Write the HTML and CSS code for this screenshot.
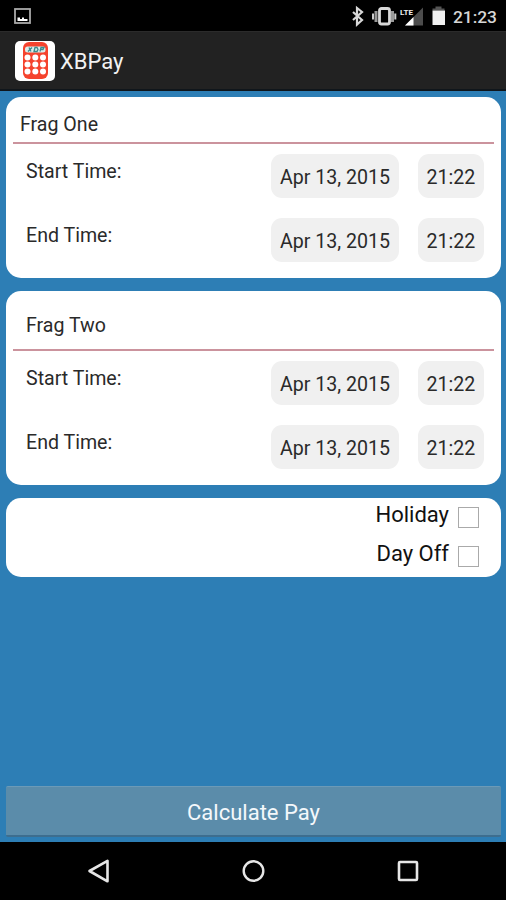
FILE: index.html
```html
<!DOCTYPE html>
<html lang="en">
<head>
<meta charset="utf-8">
<title>XBPay</title>
<link rel="stylesheet" href="styles.css">
</head>
<body>
<header class="status">
  <svg class="status-left" width="17" height="17" viewBox="0 0 17 17"><rect x="1" y="1" width="15" height="14" fill="none" stroke="#aaa" stroke-width="1.800"/><path d="M3.500 13V9.500h2.500v1.500h2V9.500h2v1.500h3.500v2z" fill="#fff"/></svg>
  <svg class="status-icons" width="96" height="22" viewBox="0 0 96 22">
    <path d="M3 7l9 8-5 4.500V3l5 4-9 8" fill="none" stroke="#d8d8d8" stroke-width="2.200"/>
    <path d="M26 6v11M42.500 6v11" stroke="#999" stroke-width="3"/><path d="M23 8.500v6M45.300 8.500v6" stroke="#ccc" stroke-width="2"/>
    <rect x="29.500" y="3.500" width="10" height="15.500" rx="2" fill="#000" stroke="#d8d8d8" stroke-width="2.800"/>
    <path d="M73 2.500v18H55z" fill="#4c4c4c"/><path d="M63.500 12v8.500H55z" fill="#fff"/>
    <text x="50" y="9.500" class="lte">LTE</text>
    <path d="M82.500 5.500v-2h3v-2h6v2h3v2z" fill="#555"/><rect x="82.500" y="5.500" width="12.500" height="14.500" fill="#f0f0f0"/>
  </svg>
  <span class="clock">21:23</span>
</header>
<div class="appbar">
  <svg class="logo" width="42" height="42" viewBox="0 0 42 42">
    <rect x="1" y="1" width="40" height="40" rx="5" fill="#fff"/>
    <rect x="9" y="2" width="25" height="37" rx="6" fill="#f5432d"/>
    <rect x="11" y="6.500" width="20.500" height="6" rx="2.500" fill="#dcecea"/>
    <path d="M14 11.500l4-4m-3 0l2 4m3 0l1-4h2l1 2-1 2zm6 0l1-4h3l-1 2h-2" fill="none" stroke="#3b8c8e" stroke-width="1.300"/>
    <g fill="#fff"><circle cx="13.500" cy="17.500" r="3"/><circle cx="21.300" cy="17.500" r="3"/><circle cx="29" cy="17.500" r="3"/><circle cx="13.500" cy="24.500" r="3"/><circle cx="21.300" cy="24.500" r="3"/><circle cx="29" cy="24.500" r="3"/><circle cx="13.500" cy="31.500" r="3"/><circle cx="21.300" cy="31.500" r="3"/><circle cx="29" cy="31.500" r="3"/></g>
  </svg>
  <h1 class="title">XBPay</h1>
</div>
<main class="content">
  <section class="card card-one">
    <h2 class="heading">Frag One</h2>
    <div class="row"><span class="label">Start Time:</span><span class="chip date">Apr 13, 2015</span><span class="chip time">21:22</span></div>
    <div class="row"><span class="label">End Time:</span><span class="chip date">Apr 13, 2015</span><span class="chip time">21:22</span></div>
  </section>
  <section class="card card-two">
    <h2 class="heading">Frag Two</h2>
    <div class="row"><span class="label">Start Time:</span><span class="chip date">Apr 13, 2015</span><span class="chip time">21:22</span></div>
    <div class="row"><span class="label">End Time:</span><span class="chip date">Apr 13, 2015</span><span class="chip time">21:22</span></div>
  </section>
  <section class="card card-options">
    <div class="option"><span class="option-label">Holiday</span><span class="box"></span></div>
    <div class="option"><span class="option-label">Day Off</span><span class="box"></span></div>
  </section>
  <div class="calculate">Calculate Pay</div>
</main>
<nav class="nav">
  <svg width="24" height="26" viewBox="0 0 24 26"><path d="M20.500 2.800v20.500L2.500 13z" fill="none" stroke="#e6e6e6" stroke-width="2.600" stroke-linejoin="round"/></svg>
  <svg width="24" height="26" viewBox="0 0 24 26"><circle cx="11.500" cy="13" r="9.800" fill="none" stroke="#e6e6e6" stroke-width="2.400"/></svg>
  <svg width="24" height="26" viewBox="0 0 24 26"><rect x="3" y="4" width="18" height="18" rx="1" fill="none" stroke="#e6e6e6" stroke-width="2.600"/></svg>
</nav>
</body>
</html>
```
FILE: styles.css
```css
* { box-sizing: border-box; }
body {
  margin: 0;
  width: 506px;
  height: 900px;
  display: flex;
  flex-direction: column;
  overflow: hidden;
  background: #2d7eb5;
  font-family: Roboto, "Liberation Sans", sans-serif;
  font-size: 19.6px;
  color: #2a2a2a;
}
.status {
  height: 31px;
  flex: none;
  display: flex;
  align-items: flex-start;
  background: #000;
  padding: 5px 9px 0 14px;
}
.status-left { margin-top: 3px; margin-right: auto; }
.status-icons { margin-right: 7px; }
.lte { font: 700 8px Roboto, sans-serif; fill: #eee; }
.clock { font-size: 17.4px; line-height: 24px; font-weight: 500; color: #d6d6d6; }
.appbar {
  height: 60px;
  flex: none;
  display: flex;
  align-items: center;
  background: #222;
  border-top: 1px solid #2b2b2b;
  border-bottom: 2px solid #10161b;
  padding-left: 14px;
}
.title { margin: 2px 0 0 4px; font-size: 22px; font-weight: 400; color: #f2f2f2; }
.content {
  flex: 1;
  display: flex;
  flex-direction: column;
  padding: 6px 5px 5px 6px;
}
.card { flex: none; background: #fff; border-radius: 15px; }
.card-one { height: 181px; margin-bottom: 13px; }
.card-two { height: 194px; margin-bottom: 12.5px; }
.heading {
  margin: 0 7px 10px;
  height: 47px;
  border-bottom: 2px solid #cb939d;
  padding: 16px 0 0 7px;
  font-size: 19.6px;
  line-height: 24px;
  font-weight: 400;
}
.card-two .heading { height: 60px; padding: 23px 0 0 13px; }
.row { height: 44px; margin: 0 17px 20px 20px; display: flex; }
.label { margin: 6px auto 0 0; line-height: 24px; }
.chip {
  height: 44px;
  border-radius: 11px;
  background: #f0f0f0;
  text-align: center;
  line-height: 48px;
}
.date { width: 128px; }
.time { width: 66px; margin-left: 19px; }
.card-options { height: 79px; padding: 3px 22px 0 0; font-size: 22px; color: #111; }
.option { height: 39px; display: flex; justify-content: flex-end; }
.option-label { line-height: 27px; margin-right: 9px; }
.box { width: 21px; height: 21px; margin-top: 6px; border: 1px solid #aaa; }
.calculate {
  height: 51px;
  margin-top: auto;
  background: #5b8caa;
  border-top: 1px solid #6c9ab7;
  border-bottom: 2px solid #3d6e8f;
  border-radius: 2px;
  color: #f4f8fb;
  font-size: 22px;
  line-height: 51px;
  text-align: center;
}
.nav {
  height: 58px;
  flex: none;
  display: flex;
  justify-content: space-between;
  align-items: center;
  background: #000;
  padding: 0 86px 0 87px;
}
```
